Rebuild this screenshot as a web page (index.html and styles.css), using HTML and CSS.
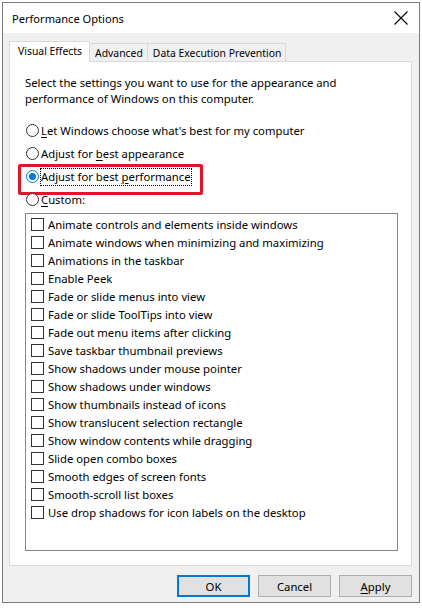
FILE: index.html
```html
<!DOCTYPE html>
<html>
<head>
<meta charset="utf-8">
<link rel="stylesheet" href="styles.css">
</head>
<body>
<div class="window">
  <div class="titlebar">
    <span class="title">Performance Options</span>
    <svg class="close" width="14" height="14" viewBox="0 0 14 14"><path d="M0.5 0.5 L13.5 13.5 M13.5 0.5 L0.5 13.5" stroke="#000" stroke-width="1.1" fill="none"/></svg>
  </div>
  <div class="content">
    <div class="tabs">
      <div class="tab active">Visual Effects</div>
      <div class="tab">Advanced</div>
      <div class="tab">Data Execution Prevention</div>
    </div>
    <div class="panel">
      <p class="intro">Select the settings you want to use for the appearance and performance of Windows on this computer.</p>
      <div class="radios">
        <div class="radio-row"><span class="radio"></span><span class="label"><u>L</u>et Windows choose what's best for my computer</span></div>
        <div class="radio-row"><span class="radio"></span><span class="label">Adjust for <u>b</u>est appearance</span></div>
        <div class="radio-row highlighted"><span class="radio checked"></span><span class="label focus">Adjust for best <u>p</u>erformance</span></div>
        <div class="radio-row"><span class="radio"></span><span class="label"><u>C</u>ustom:</span></div>
      </div>
      <div class="listbox">
        <div class="item"><span class="check"></span>Animate controls and elements inside windows</div>
        <div class="item"><span class="check"></span>Animate windows when minimizing and maximizing</div>
        <div class="item"><span class="check"></span>Animations in the taskbar</div>
        <div class="item"><span class="check"></span>Enable Peek</div>
        <div class="item"><span class="check"></span>Fade or slide menus into view</div>
        <div class="item"><span class="check"></span>Fade or slide ToolTips into view</div>
        <div class="item"><span class="check"></span>Fade out menu items after clicking</div>
        <div class="item"><span class="check"></span>Save taskbar thumbnail previews</div>
        <div class="item"><span class="check"></span>Show shadows under mouse pointer</div>
        <div class="item"><span class="check"></span>Show shadows under windows</div>
        <div class="item"><span class="check"></span>Show thumbnails instead of icons</div>
        <div class="item"><span class="check"></span>Show translucent selection rectangle</div>
        <div class="item"><span class="check"></span>Show window contents while dragging</div>
        <div class="item"><span class="check"></span>Slide open combo boxes</div>
        <div class="item"><span class="check"></span>Smooth edges of screen fonts</div>
        <div class="item"><span class="check"></span>Smooth-scroll list boxes</div>
        <div class="item"><span class="check"></span>Use drop shadows for icon labels on the desktop</div>
      </div>
    </div>
    <div class="buttons">
      <button class="btn default">OK</button>
      <button class="btn">Cancel</button>
      <button class="btn"><u>A</u>pply</button>
    </div>
  </div>
</div>
</body>
</html>
```
FILE: styles.css
```css
* { box-sizing: border-box; }
html, body { margin: 0; padding: 0; background: #ffffff; }
body {
  font-family: "Noto Sans", "Open Sans", sans-serif;
  font-size: 11.3px;
  color: #000;
}
.window {
  margin: 2px 0 0 2px;
  width: 418px;
  height: 601px;
  border: 1px solid #7a7a7a;
  background: #f0f0f0;
  display: flex;
  flex-direction: column;
}
.titlebar {
  height: 30px;
  background: #fff;
  display: flex;
  align-items: center;
  justify-content: space-between;
  padding: 0 11px 0 9px;
}
.title { font-size: 11.1px; }
.close { display: block; }
.content {
  padding: 8px 7px 0 6px;
  display: flex;
  flex-direction: column;
}
.tabs {
  display: flex;
  align-items: flex-end;
  height: 20px;
}
.tab {
  height: 18px;
  line-height: 18px;
  font-size: 10.4px;
  padding: 0 4px 0 5px;
  border: 1px solid #d9d9d9;
  border-bottom: none;
  border-left: none;
  background: #f0f0f0;
}
.tab.active {
  height: 21px;
  line-height: 18px;
  padding: 0 7px 0 8px;
  border-left: 1px solid #d9d9d9;
  background: #fff;
  margin-bottom: -1px;
  position: relative;
  z-index: 1;
}
.panel {
  height: 505px;
  background: #fff;
  border: 1px solid #d9d9d9;
  padding: 13px 13px 0 15px;
}
.intro {
  margin: 0;
  line-height: 16px;
  width: 340px;
}
.radios {
  margin-top: 12px;
}
.radio-row {
  height: 23px;
  display: flex;
  align-items: center;
  position: relative;
}
.radio {
  width: 13px;
  height: 13px;
  border: 1px solid #333;
  border-radius: 50%;
  background: #fff;
  margin-left: 1px;
  margin-right: 2px;
  flex: none;
  display: flex;
  align-items: center;
  justify-content: center;
}
.radio.checked { border-color: #0078d7; }
.radio.checked::after {
  content: "";
  width: 7px;
  height: 7px;
  border-radius: 50%;
  background: #0078d7;
}
.label u, .btn u { text-decoration-thickness: 1px; text-underline-offset: 2px; }
.label.focus {
  outline: 1px dotted #000;
  outline-offset: 0;
  line-height: 16px;
}
.highlighted::before {
  content: "";
  position: absolute;
  left: -7px;
  top: -1px;
  width: 179px;
  height: 25px;
  border: 3px solid #e0162b;
  border-radius: 2px;
}
.listbox {
  margin-top: 2px;
  height: 338px;
  width: 373px;
  border: 1px solid #828790;
  padding: 1px 0 0 5px;
}
.item {
  height: 18px;
  display: flex;
  align-items: center;
}
.check {
  width: 13px;
  height: 13px;
  border: 1px solid #333;
  background: #fff;
  margin-right: 4px;
  flex: none;
}
.buttons {
  margin-top: 9px;
  display: flex;
  justify-content: flex-end;
  gap: 8px;
  padding-right: 0;
}
.btn {
  width: 73px;
  height: 22px;
  font-family: inherit;
  font-size: 11.3px;
  color: #000;
  background: #e1e1e1;
  border: 1px solid #adadad;
  padding: 0;
  border-radius: 0;
}
.btn.default {
  border: 2px solid #0078d7;
}
```
